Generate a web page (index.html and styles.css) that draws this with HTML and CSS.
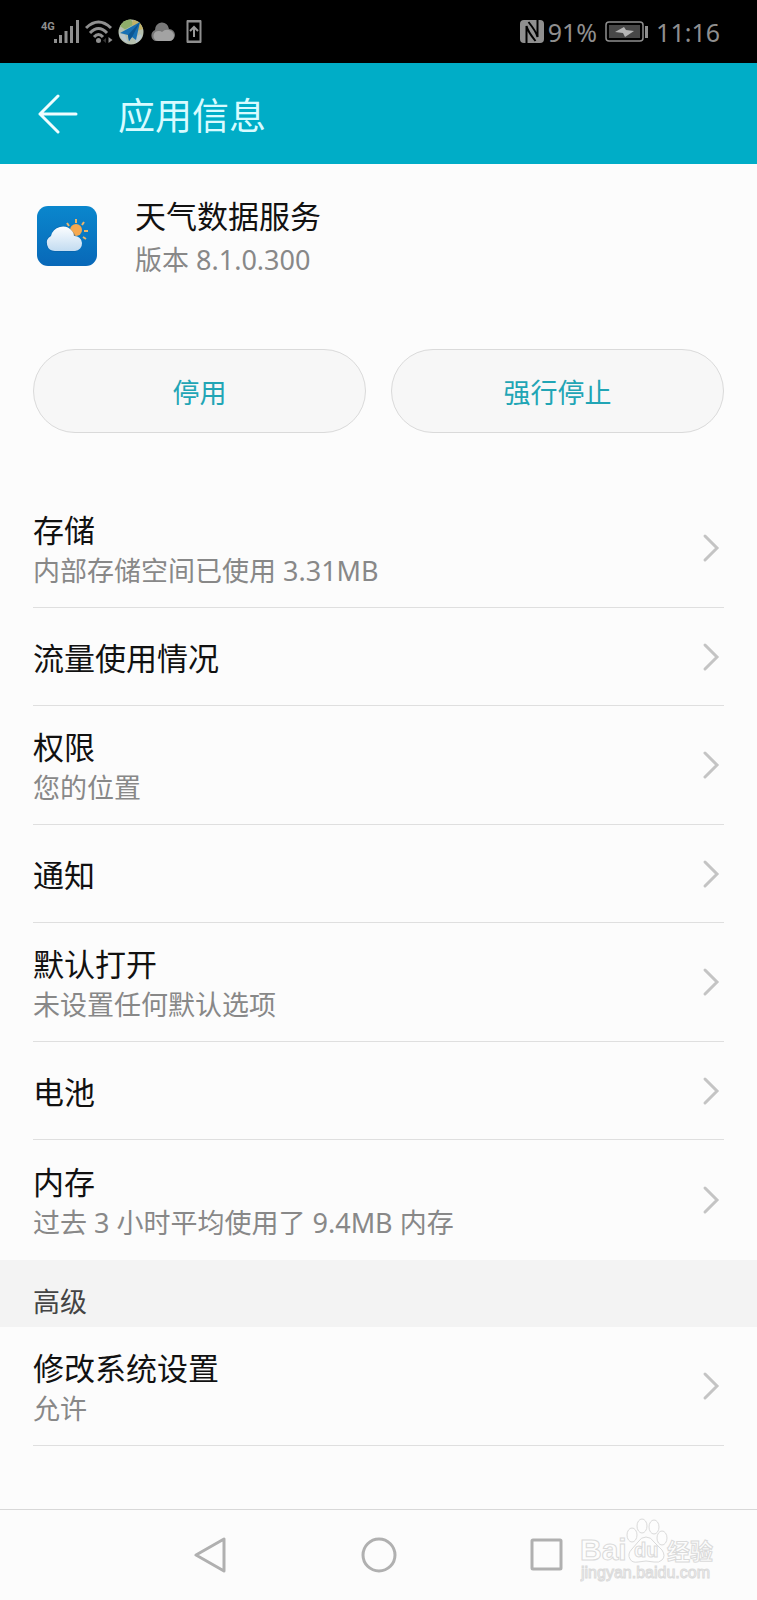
FILE: index.html
```html
<!DOCTYPE html>
<html lang="zh-CN">

<head>
    <meta charset="utf-8">
    <meta name="viewport" content="width=device-width, initial-scale=1">
    <title>应用信息</title>
    <link rel="stylesheet" href="styles.css">
</head>

<body>
    <svg width="0" height="0" class="defs">
        <symbol id="chevron" viewBox="0 0 18 30">
            <path d="M3 3l12 12L3 27" fill="none" stroke="#c4c4c4" stroke-width="3" stroke-linecap="round" />
        </symbol>
    </svg>
    <div class="status">
        <div class="status-left">
            <svg width="40" height="28" viewBox="0 0 40 28">
                <text x="1" y="11" class="net">4G</text>
                <path d="M15.500 24v-4M20.500 24v-8M26 24V12M31.500 24V7M37.500 24V1" stroke="#8f8f8f" stroke-width="3" />
            </svg>
            <svg width="28" height="28" viewBox="1 0 28 28">
                <g fill="none" stroke="#8f8f8f" stroke-width="3">
                    <path d="M2 9Q14.500-3 27 9" />
                    <path d="M6 14Q14.500 5 23 14" />
                    <path d="M10 18Q14.500 13 19 18" />
                </g>
                <circle cx="14.500" cy="21.500" r="2.500" fill="#8f8f8f" />
                <path d="M22 19v5l-3-2.500z" fill="#333" />
                <path d="M24.500 18v6l4-3z" fill="#8f8f8f" />
            </svg>
            <svg width="26" height="28" viewBox="0 0 26 28">
                <circle cx="13" cy="13" r="12.500" fill="#b5bfae" />
                <path d="M2 7Q6 0 13 .500l3 5-9 5z" fill="#8fae6a" />
                <path d="M15 1q8 1 10 9l-6 2-5-7z" fill="#c2b266" />
                <path d="M1 14l6 2 3 8Q2 21 1 14zM17 19l5-4 2 2q-2 5-6 7z" fill="#b9c7cd" />
                <path d="M22 3L2 14l8 2 1 6 3-4 4 3z" fill="#1770b4" />
                <path d="M22 3L10 16l1 6 3-4z" fill="#0d5692" />
            </svg>
            <svg width="26" height="28" viewBox="0 0 26 28">
                <path d="M6 22a6 6 0 0 1 0-11 7 7 0 0 1 14-1 6 6 0 0 1 0 12z" fill="#777" />
                <path d="M9 22a5 5 0 0 1 1-10q2 0 3 1a7 7 0 0 1 12 3q0 6-5 6z" fill="#a3a3a3" />
            </svg>
            <svg class="upload" width="16" height="28" viewBox="0 0 16 28">
                <path d="M1.500 2.500h13v20h-13z" fill="none" stroke="#8f8f8f" stroke-width="2" />
                <path d="M1 22h14v2H1zM1 1h14v2H1z" fill="#8f8f8f" />
                <path d="M8 18V8M4 12l4-4 4 4" fill="none" stroke="#9b9b9b" stroke-width="2" />
            </svg>
        </div>
        <div class="status-right">
            <svg width="24" height="26" viewBox="0 0 24 26">
                <rect x="0" y="1" width="24" height="23" rx="4" fill="#8f8f8f" />
                <path d="M6.500 25V7q1 5 9 15M17.500 0v18q-1-5-9-15" fill="none" stroke="#000" stroke-width="2" />
            </svg>
            <span class="percent">91%</span>
            <svg width="44" height="22" viewBox="0 0 44 22">
                <rect x="1" y="1" width="37" height="19" rx="3" fill="none" stroke="#8f8f8f" stroke-width="1.500" />
                <rect x="4" y="4" width="31" height="13" fill="#484848" />
                <path d="M10 11l9-5 2 3 8 1-9 6-2-4z" fill="#b5b5b5" />
                <path d="M40 5h3v12h-3z" fill="#8f8f8f" />
            </svg>
            <span class="clock">11:16</span>
        </div>
    </div>
    <header class="header">
        <button class="back" type="button" aria-label="返回">
            <svg width="40" height="40" viewBox="0 0 40 40">
                <path d="M20 2L2 20l18 18M2 20h36" fill="none" stroke="#effdff" stroke-width="3" stroke-linecap="round" stroke-linejoin="round" />
            </svg>
        </button>
        <h1>应用信息</h1>
    </header>
    <main>
        <div class="app">
            <svg width="60" height="60" viewBox="0 0 60 60">
                <defs>
                    <linearGradient id="sky" x1="0" y1="0" x2="0" y2="1">
                        <stop offset="0" stop-color="#0a87cd" />
                        <stop offset="1" stop-color="#0868b8" />
                    </linearGradient>
                    <linearGradient id="cloud" x1="0" y1="0" x2="0" y2="1">
                        <stop offset="0" stop-color="#fbfdff" />
                        <stop offset="1" stop-color="#c3dcf1" />
                    </linearGradient>
                </defs>
                <rect width="60" height="60" rx="11" fill="url(#sky)" />
                <path d="M39 13v4M30 17l2 3M47 16l-2 3M47 25h4M46 31l3 2" stroke="#e9b56c" stroke-width="2" />
                <circle cx="39" cy="24" r="6" fill="#f6a950" />
                <path d="M19 46a9 9 0 0 1-5-17 12 12 0 0 1 22-3 8 8 0 0 1 3 5 8 8 0 0 1-1 15z" fill="#075b9f" opacity=".4" />
                <path d="M18 45a8 8 0 0 1-4-15 12 12 0 0 1 21-5q2 2 2 5a7.500 7.500 0 0 1 1 15z" fill="url(#cloud)" />
            </svg>
            <div>
                <h2 class="title">天气数据服务</h2>
                <p class="sub">版本 8.1.0.300</p>
            </div>
        </div>
        <div class="actions">
            <button type="button">停用</button>
            <button type="button">强行停止</button>
        </div>
        <nav class="list">
            <a href="#storage" class="row">
                <div class="text">
                    <div class="title">存储</div>
                    <div class="sub">内部存储空间已使用 3.31MB</div>
                </div>
                <svg width="18" height="30"><use href="#chevron" /></svg>
            </a>
            <a href="#traffic" class="row single">
                <div class="text title">流量使用情况</div>
                <svg width="18" height="30"><use href="#chevron" /></svg>
            </a>
            <a href="#permissions" class="row">
                <div class="text">
                    <div class="title">权限</div>
                    <div class="sub">您的位置</div>
                </div>
                <svg width="18" height="30"><use href="#chevron" /></svg>
            </a>
            <a href="#notify" class="row single">
                <div class="text title">通知</div>
                <svg width="18" height="30"><use href="#chevron" /></svg>
            </a>
            <a href="#defaults" class="row">
                <div class="text">
                    <div class="title">默认打开</div>
                    <div class="sub">未设置任何默认选项</div>
                </div>
                <svg width="18" height="30"><use href="#chevron" /></svg>
            </a>
            <a href="#battery" class="row single">
                <div class="text title">电池</div>
                <svg width="18" height="30"><use href="#chevron" /></svg>
            </a>
            <a href="#memory" class="row last">
                <div class="text">
                    <div class="title">内存</div>
                    <div class="sub">过去 3 小时平均使用了 9.4MB 内存</div>
                </div>
                <svg width="18" height="30"><use href="#chevron" /></svg>
            </a>
        </nav>
        <h3 class="section">高级</h3>
        <nav class="list">
            <a href="#system" class="row">
                <div class="text">
                    <div class="title">修改系统设置</div>
                    <div class="sub">允许</div>
                </div>
                <svg width="18" height="30"><use href="#chevron" /></svg>
            </a>
        </nav>
    </main>
    <footer class="navbar">
        <button type="button" aria-label="返回">
            <svg width="36" height="36" viewBox="0 0 36 36">
                <path d="M31 2v32L3 18z" fill="none" stroke="#b0b0b0" stroke-width="3" stroke-linejoin="round" />
            </svg>
        </button>
        <button type="button" aria-label="主屏幕">
            <svg width="36" height="36" viewBox="0 0 36 36">
                <circle cx="18" cy="18" r="16" fill="none" stroke="#b0b0b0" stroke-width="3" />
            </svg>
        </button>
        <button type="button" aria-label="最近任务">
            <svg width="36" height="36" viewBox="0 0 36 36">
                <rect x="3" y="3" width="29" height="29" rx="1" fill="none" stroke="#b0b0b0" stroke-width="3" />
            </svg>
        </button>
        <svg class="mark" width="140" height="68" viewBox="0 0 140 68">
            <g fill="#fdfdfd" stroke="#dadada">
                <text x="0" y="42" class="mark-name">Bai</text>
                <ellipse cx="52" cy="17" rx="5" ry="7" />
                <ellipse cx="62" cy="8" rx="5" ry="7" />
                <ellipse cx="74" cy="9" rx="5" ry="7" />
                <ellipse cx="82" cy="20" rx="5" ry="7" />
                <path d="M66 19q5 0 8 5l8 8q4 6 0 10-3 3-8 2-8-2-16 0-6 1-8-3-3-5 2-10l6-7q3-5 8-5z" />
                <text x="54" y="39" class="mark-du">du</text>
                <text x="87" y="42" class="mark-cn">经验</text>
                <text x="1" y="60" class="mark-url">jingyan.baidu.com</text>
            </g>
        </svg>
    </footer>
</body>

</html>
```
FILE: styles.css
```css
* {
    box-sizing: border-box;
}

body {
    margin: 0;
    min-height: 100vh;
    display: flex;
    flex-direction: column;
    background: #fcfcfc;
    color: #111;
    font-family: "Noto Sans", "Noto Sans CJK SC", sans-serif;
}

h1,
h2,
h3,
p {
    margin: 0;
    font-weight: 400;
}

svg {
    display: block;
    flex-shrink: 0;
}

button {
    font-family: inherit;
    cursor: pointer;
}

.defs {
    position: absolute;
}

.status {
    display: flex;
    justify-content: space-between;
    align-items: center;
    height: 63px;
    padding: 0 37px 0 40px;
    background: #000;
    color: #8f8f8f;
    font-size: 25px;
}

.status-left,
.status-right {
    display: flex;
    align-items: center;
}

.status-left {
    gap: 5px;
    padding-top: 2px;
}

.upload {
    margin-left: 6px;
}

.net {
    font: 700 11px "Roboto", sans-serif;
    fill: #8f8f8f;
}

.percent {
    margin: 0 8px 0 4px;
}

.clock {
    margin-left: 7px;
}

.header {
    display: flex;
    align-items: center;
    gap: 40px;
    height: 101px;
    padding: 0 38px;
    background: #00adc7;
    color: #d8fbff;
}

.header h1 {
    padding-top: 4px;
    font-size: 37px;
    line-height: 48px;
}

.back {
    padding: 0;
    border: 0;
    background: none;
}

.app {
    display: flex;
    align-items: flex-start;
    gap: 38px;
    padding: 42px 37px 0;
}

.app > div {
    margin-top: -11px;
}

.title {
    font-size: 31px;
    line-height: 42px;
}

.sub {
    font-size: 27px;
    line-height: 38px;
    color: #888;
}

.app .sub {
    line-height: 46px;
}

.actions {
    display: flex;
    gap: 25px;
    padding: 66px 33px 56px;
}

.actions button {
    flex: 1;
    height: 84px;
    padding: 0;
    border: 1px solid #dadada;
    border-radius: 42px;
    background: #f7f7f7;
    color: #21a5b5;
    font-size: 27px;
}

.list {
    padding: 0 33px;
}

.row {
    display: flex;
    justify-content: space-between;
    align-items: center;
    height: 119px;
    padding-right: 4px;
    border-bottom: 1px solid #dfdfdf;
    color: inherit;
    text-decoration: none;
}

.text {
    padding-top: 3px;
}

.text .sub {
    line-height: 40px;
}

.single {
    height: 98px;
}

.last {
    height: 120px;
    border-bottom: 0;
}

.section {
    height: 67px;
    padding: 23px 33px 0;
    background: #f3f3f3;
    color: #444;
    font-size: 27px;
    line-height: 38px;
}

.navbar {
    position: relative;
    display: flex;
    justify-content: center;
    gap: 132px;
    height: 91px;
    margin-top: auto;
    border-top: 1px solid #d8d8d8;
}

.navbar button {
    padding: 0;
    border: 0;
    background: none;
}

/* watermark lies over the navigation bar */
.mark {
    position: absolute;
    right: 37px;
    top: 8px;
}

.mark-name {
    font: 700 30px "Liberation Sans", sans-serif;
}

.mark-du {
    font: 700 20px "Liberation Sans", sans-serif;
}

.mark-cn {
    font: 700 23px "Noto Sans CJK SC", sans-serif;
}

.mark-url {
    font: 400 16px "Liberation Sans", sans-serif;
}
```
